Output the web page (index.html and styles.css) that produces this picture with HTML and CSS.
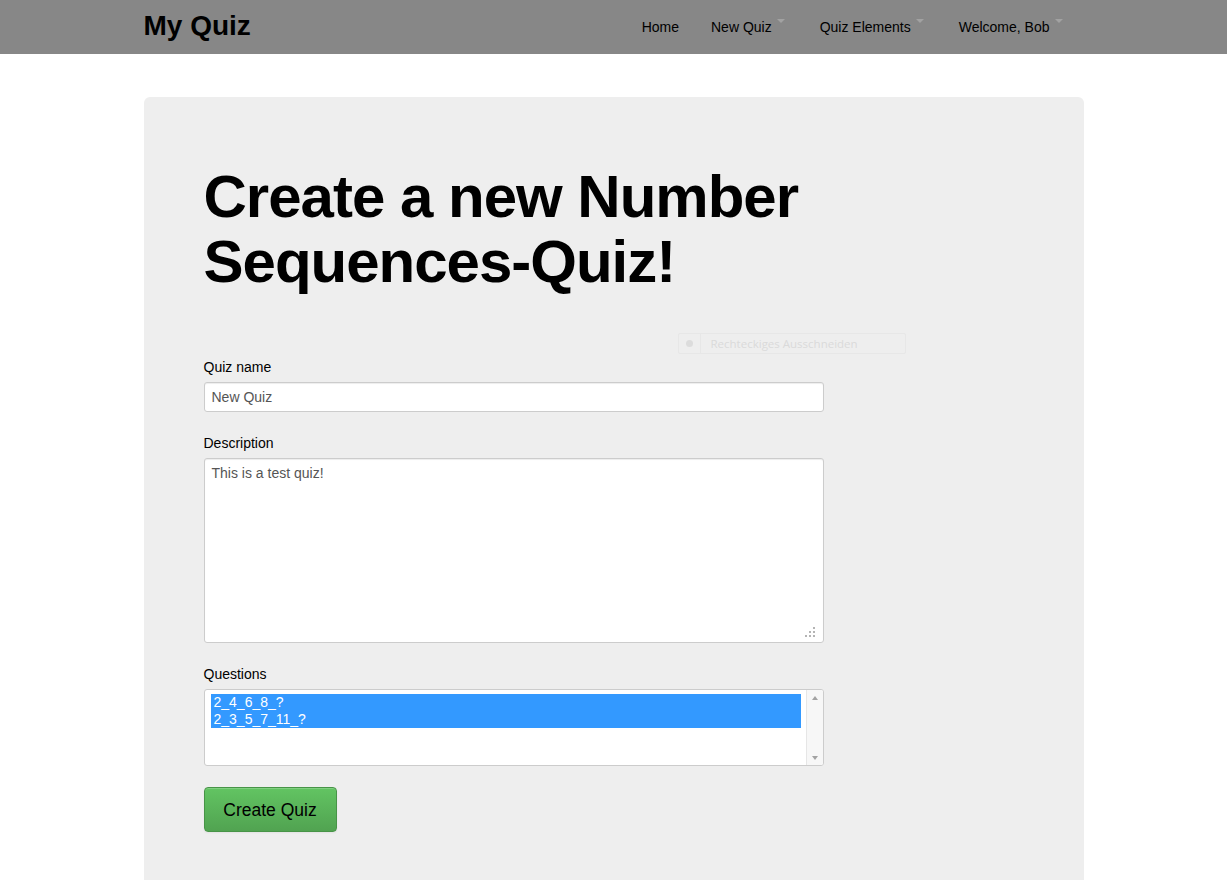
FILE: index.html
```html
<!DOCTYPE html>
<html lang="en">
<head>
<meta charset="utf-8">
<title>My Quiz</title>
<link rel="stylesheet" href="styles.css">
</head>
<body>
<header class="navbar">
  <div class="nav-inner">
    <a class="brand" href="#">My Quiz</a>
    <nav class="nav">
      <a class="nav-link first" href="#">Home</a>
      <a class="nav-link" href="#">New Quiz<span class="caret"></span></a>
      <a class="nav-link" href="#">Quiz Elements<span class="caret"></span></a>
      <a class="nav-link last" href="#">Welcome, Bob<span class="caret"></span></a>
    </nav>
  </div>
</header>

<main class="container">
  <section class="hero">
    <h1 class="hero-title">Create a new Number Sequences-Quiz!</h1>

    <div class="ghost-tip">
      <span class="ghost-icon"><span class="ghost-dot"></span></span>
      <span class="ghost-text">Rechteckiges Ausschneiden</span>
    </div>

    <form class="quiz-form">
      <label class="field-label" for="qname">Quiz name</label>
      <input class="text-input" id="qname" type="text" value="New Quiz">

      <label class="field-label" for="qdesc">Description</label>
      <div class="textarea-wrap">
        <textarea class="text-area" id="qdesc">This is a test quiz!</textarea>
        <svg class="grip" width="11" height="11" viewBox="0 0 11 11">
          <rect x="8" y="0" width="2" height="2"/>
          <rect x="4" y="4" width="2" height="2"/>
          <rect x="8" y="4" width="2" height="2"/>
          <rect x="0" y="8" width="2" height="2"/>
          <rect x="4" y="8" width="2" height="2"/>
          <rect x="8" y="8" width="2" height="2"/>
        </svg>
      </div>

      <label class="field-label">Questions</label>
      <div class="listbox" role="listbox" aria-multiselectable="true">
        <div class="list-items">
          <div class="option selected" role="option" aria-selected="true">2_4_6_8_?</div>
          <div class="option selected" role="option" aria-selected="true">2_3_5_7_11_?</div>
        </div>
        <div class="scrollbar">
          <span class="arrow up"></span>
          <span class="arrow down"></span>
        </div>
      </div>

      <button class="btn-success" type="button">Create Quiz</button>
    </form>
  </section>
</main>
</body>
</html>
```

FILE: styles.css
```css
html, body {
  margin: 0;
  padding: 0;
}

body {
  font-family: "Liberation Sans", Arial, sans-serif;
  font-size: 14px;
  line-height: 20px;
  color: #000;
  background: #fff;
}

.navbar {
  height: 54px;
  background: #878787;
}

.nav-inner {
  width: 940px;
  margin: 0 auto;
  height: 54px;
  display: flex;
  align-items: center;
  justify-content: space-between;
}

.brand {
  font-size: 28px;
  font-weight: bold;
  line-height: 34px;
  color: #000;
  text-decoration: none;
  align-self: flex-start;
  margin-top: 9px;
}

.nav {
  display: flex;
  align-items: center;
  margin-right: 1px;
}

.nav-link {
  display: flex;
  align-items: flex-start;
  color: #000;
  text-decoration: none;
  font-size: 14px;
  line-height: 20px;
  padding: 0 20px 0 15px;
  margin-top: -1px;
}

.nav-link.first {
  padding-right: 17px;
}

.caret {
  display: inline-block;
  width: 0;
  height: 0;
  border-left: 4px solid transparent;
  border-right: 4px solid transparent;
  border-top: 4px solid #a2a2a2;
  margin-left: 5px;
  margin-top: 2px;
}

.container {
  width: 940px;
  margin: 43px auto 0;
}

.hero {
  position: relative;
  background: #eeeeee;
  border-radius: 6px 6px 0 0;
  padding: 60px 60px 60px;
  min-height: 700px;
}

.hero-title {
  margin: 7px 0 0;
  font-size: 60px;
  line-height: 65px;
  font-weight: bold;
  letter-spacing: -1px;
  width: 700px;
  color: #000;
}

.ghost-tip {
  position: absolute;
  left: 534px;
  top: 236px;
  width: 228px;
  height: 21px;
  border: 1px solid #e7e7e7;
  border-radius: 2px;
  display: flex;
  align-items: center;
  box-sizing: border-box;
}

.ghost-icon {
  width: 21px;
  height: 19px;
  border-right: 1px solid #e7e7e7;
  display: flex;
  align-items: center;
  justify-content: center;
}

.ghost-dot {
  width: 7px;
  height: 7px;
  border-radius: 50%;
  background: #dcdcdc;
}

.ghost-text {
  font-family: "Open Sans", "Noto Sans", sans-serif;
  font-size: 11.5px;
  color: #dadada;
  margin-left: 10px;
  line-height: 19px;
}

.quiz-form {
  margin-top: 63px;
  width: 620px;
}

.field-label {
  display: block;
  font-size: 14px;
  line-height: 20px;
  margin-bottom: 5px;
  color: #000;
}

.text-input,
.text-area {
  display: block;
  box-sizing: border-box;
  width: 620px;
  border: 1px solid #cccccc;
  border-radius: 3px;
  background: #fff;
  box-shadow: inset 0 1px 1px rgba(0, 0, 0, 0.075);
  font-family: "Liberation Sans", Arial, sans-serif;
  font-size: 14px;
  line-height: 20px;
  color: #555555;
  padding: 4px 7px;
  margin: 0;
  outline: none;
}

.text-input {
  height: 30px;
  margin-bottom: 21px;
}

.textarea-wrap {
  position: relative;
  margin-bottom: 21px;
}

.text-area {
  height: 185px;
  resize: none;
}

.grip {
  position: absolute;
  right: 8px;
  bottom: 5px;
  fill: #b4b4b4;
}

.listbox {
  display: flex;
  box-sizing: border-box;
  width: 620px;
  height: 77px;
  border: 1px solid #cccccc;
  border-radius: 3px;
  background: #fff;
  margin-bottom: 21px;
  overflow: hidden;
}

.list-items {
  flex: 1;
  padding: 4px 5px 0 6px;
}

.option {
  height: 17px;
  line-height: 17px;
  font-size: 14px;
  padding-left: 3px;
  color: #333;
}

.option.selected {
  background: #3399ff;
  color: #fff;
}

.scrollbar {
  width: 17px;
  border-left: 1px solid #e6e6e6;
  background: #f7f7f7;
  display: flex;
  flex-direction: column;
  justify-content: space-between;
  align-items: center;
  padding: 6px 0 5px;
  box-sizing: border-box;
}

.arrow {
  width: 0;
  height: 0;
  border-left: 3px solid transparent;
  border-right: 3px solid transparent;
}

.arrow.up {
  border-bottom: 4px solid #a3a3a3;
}

.arrow.down {
  border-top: 4px solid #a3a3a3;
}

.btn-success {
  display: block;
  box-sizing: border-box;
  width: 133px;
  height: 45px;
  padding: 0;
  font-family: "Liberation Sans", Arial, sans-serif;
  font-size: 17.5px;
  line-height: 20px;
  color: #000;
  background: linear-gradient(to bottom, #62c462, #51a351);
  border: 1px solid #479447;
  border-radius: 4px;
  box-shadow: inset 0 1px 0 rgba(255, 255, 255, 0.2), 0 1px 2px rgba(0, 0, 0, 0.05);
  cursor: pointer;
}
```
